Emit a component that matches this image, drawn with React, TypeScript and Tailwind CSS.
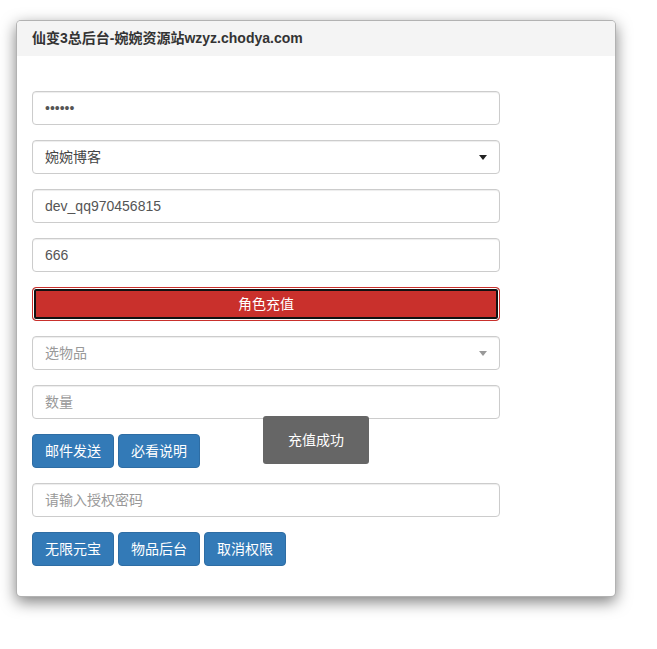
const font = "font-['Liberation_Sans','Noto_Sans_CJK_SC',sans-serif]";

function Input({ value, placeholder, type = "text" }: { value?: string; placeholder?: string; type?: string }) {
  return (
    <input
      type={type}
      defaultValue={value}
      placeholder={placeholder}
      className="block h-[34px] w-[468px] rounded-[4px] border border-[#ccc] bg-white px-3 text-[14px] text-[#555] placeholder:text-[#999] shadow-[inset_0_1px_1px_rgba(0,0,0,0.075)] outline-none"
    />
  );
}

function Select({ label, muted }: { label: string; muted?: boolean }) {
  return (
    <div className="flex h-[34px] w-[468px] items-center justify-between rounded-[4px] border border-[#ccc] bg-white pl-3 pr-[12px] text-[14px] shadow-[inset_0_1px_1px_rgba(0,0,0,0.075)]">
      <span className={muted ? "text-[#999]" : "text-[#444]"}>{label}</span>
      <span
        className={
          "h-0 w-0 border-x-[4px] border-t-[5px] border-x-transparent " +
          (muted ? "border-t-[#999]" : "border-t-[#222]")
        }
      />
    </div>
  );
}

function Btn({ children }: { children: React.ReactNode }) {
  return (
    <button className="h-[34px] rounded-[4px] border border-[#2e6da4] bg-[#337ab7] px-3 text-[14px] text-white">
      {children}
    </button>
  );
}

export default function App() {
  return (
    <div className={`relative min-h-[649px] bg-white pt-[20px] ${font}`}>
      <div className="ml-[16px] w-[600px] rounded-[5px] border border-[rgba(0,0,0,0.3)] bg-white shadow-[0_5px_15px_rgba(0,0,0,0.5)]">
        <div className="flex h-[35px] items-center rounded-t-[4px] bg-[#f4f4f4] px-[15px] text-[14px] font-bold text-[#333]">
          仙变3总后台-婉婉资源站wzyz.chodya.com
        </div>
        <div className="flex flex-col gap-[15px] px-[15px] pb-[30px] pt-[35px]">
          <Input type="password" value="123456" />
          <Select label="婉婉博客" />
          <Input value="dev_qq970456815" />
          <Input value="666" />
          <button className="h-[34px] w-[468px] rounded-[4px] border border-[#c9302c] bg-[#c9302c] text-[14px] text-white shadow-[inset_0_0_0_1px_#fff,inset_0_0_0_3px_#111]">
            角色充值
          </button>
          <Select label="选物品" muted />
          <Input placeholder="数量" />
          <div className="flex gap-[4px]">
            <Btn>邮件发送</Btn>
            <Btn>必看说明</Btn>
          </div>
          <Input placeholder="请输入授权密码" />
          <div className="flex gap-[4px]">
            <Btn>无限元宝</Btn>
            <Btn>物品后台</Btn>
            <Btn>取消权限</Btn>
          </div>
        </div>
      </div>
      <div className="absolute left-[263px] top-[416px] flex h-[48px] w-[106px] items-center justify-center rounded-[3px] bg-[#666] text-[14px] text-white">
        充值成功
      </div>
    </div>
  );
}
